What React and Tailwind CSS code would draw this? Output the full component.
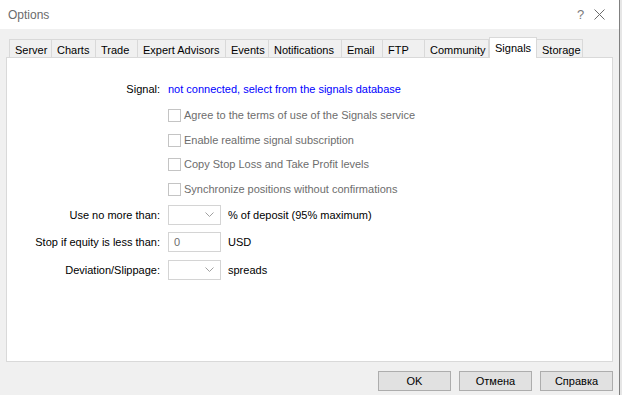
import React from "react";

const tabs = [
  { name: "Server", w: 43 },
  { name: "Charts", w: 44 },
  { name: "Trade", w: 42 },
  { name: "Expert Advisors", w: 88 },
  { name: "Events", w: 43 },
  { name: "Notifications", w: 73 },
  { name: "Email", w: 41 },
  { name: "FTP", w: 42 },
  { name: "Community", w: 64 },
  { name: "Signals", w: 48, active: true },
  { name: "Storage", w: 46 },
];

const checks = [
  { label: "Agree to the terms of use of the Signals service", mt: "mt-[10px]" },
  { label: "Enable realtime signal subscription", mt: "mt-[9px]" },
  { label: "Copy Stop Loss and Take Profit levels", mt: "mt-[8px]" },
  { label: "Synchronize positions without confirmations", mt: "mt-[9px]" },
];

function Chevron() {
  return (
    <svg width="9" height="6" viewBox="0 0 9 6" className="text-[#a0a0a0]">
      <path d="M0.5 0.5 L4.5 4.5 L8.5 0.5" fill="none" stroke="currentColor" strokeWidth="1" />
    </svg>
  );
}

function Combo() {
  return (
    <div className="w-[53px] h-[20px] border border-[#d4d4d4] bg-white flex items-center justify-end pr-[6px]">
      <Chevron />
    </div>
  );
}

function FormRow({ label, mt, children, after }) {
  return (
    <div className={`flex items-center h-[20px] ${mt}`}>
      <div className="w-[153px] text-right">{label}</div>
      <div className="ml-[8px]">{children}</div>
      <div className="ml-[7px]">{after}</div>
    </div>
  );
}

export default function App() {
  return (
    <div className="w-[622px] h-[395px] flex bg-[#f0f0f0] overflow-hidden text-[11px] text-black font-['Liberation_Sans',Arial,sans-serif] whitespace-nowrap">
      <div className="w-[619px] flex flex-col">
        {/* title bar */}
        <div className="h-[29px] bg-white flex items-center pl-[8px] text-[#6b6b6b] text-[12px]">
          <div className="flex-1">Options</div>
          <div className="w-[8px] text-[#7a7a7a] text-[13px] mr-[9px]">?</div>
          <svg width="11" height="11" viewBox="0 0 11 11" className="mr-[14px]">
            <path d="M0.5 0.5 L10.5 10.5 M10.5 0.5 L0.5 10.5" stroke="#6b6b6b" strokeWidth="1" />
          </svg>
        </div>

        {/* tabs */}
        <div className="flex items-end h-[21px] mt-[7px] ml-[9px]">
          {tabs.map((t, i) =>
            t.active ? (
              <div
                key={t.name}
                style={{ width: t.w }}
                className="relative z-10 h-[21px] -mb-px bg-white border border-b-0 border-[#d9d9d9] pl-[5px] pt-[2px]"
              >
                {t.name}
              </div>
            ) : (
              <div
                key={t.name}
                style={{ width: t.w }}
                className={`h-[18px] bg-[#f0f0f0] border-t border-r border-[#d9d9d9] pl-[5px] pt-[2px] ${i === 0 ? "border-l" : ""}`}
              >
                {t.name}
              </div>
            )
          )}
        </div>

        {/* panel */}
        <div className="ml-[6px] w-[607px] h-[305px] bg-white border border-[#d9d9d9] flex flex-col">
          <div className="flex items-center h-[16px] mt-[23px]">
            <div className="w-[153px] text-right">Signal:</div>
            <div className="ml-[8px] text-[#0000ff]">not connected, select from the signals database</div>
          </div>

          {checks.map((c) => (
            <div key={c.label} className={`flex items-center h-[16px] ${c.mt}`}>
              <div className="ml-[161px] w-[13px] h-[13px] border border-[#c4c4c4] bg-white" />
              <div className="ml-[3px] text-[#6d6d6d]">{c.label}</div>
            </div>
          ))}

          <FormRow label="Use no more than:" mt="mt-[8px]" after="% of deposit (95% maximum)">
            <Combo />
          </FormRow>
          <FormRow label="Stop if equity is less than:" mt="mt-[7px]" after="USD">
            <div className="w-[53px] h-[20px] border border-[#d4d4d4] bg-white flex items-center pl-[5px] text-[#6d6d6d]">
              0
            </div>
          </FormRow>
          <FormRow label="Deviation/Slippage:" mt="mt-[8px]" after="spreads">
            <Combo />
          </FormRow>
        </div>

        {/* buttons */}
        <div className="flex justify-end gap-[8px] mt-[9px] pr-[6px]">
          <button className="w-[73px] h-[20px] bg-[#e1e1e1] border border-[#adadad]">OK</button>
          <button className="w-[73px] h-[20px] bg-[#e1e1e1] border border-[#adadad]">Отмена</button>
          <button className="w-[73px] h-[20px] bg-[#e1e1e1] border border-[#adadad]">Справка</button>
        </div>
      </div>
      <div className="w-px bg-[#808080]" />
      <div className="flex-1 bg-[#e6e6e6]" />
    </div>
  );
}
